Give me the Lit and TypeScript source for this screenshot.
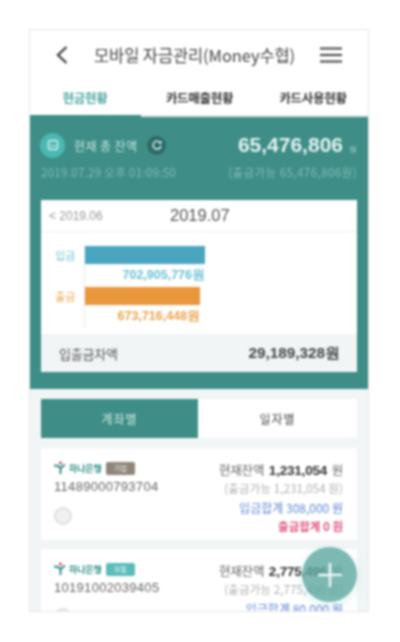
import { LitElement, html, css } from "lit";
import { customElement } from "lit/decorators.js";

@customElement("app-root")
export class AppRoot extends LitElement {
  static styles = css`
    :host { display: block; width: 400px; height: 642px; background: #fff; overflow: hidden; font-family: "Noto Sans CJK KR", "Noto Sans", sans-serif; }
    .page { padding: 29px 0 0 29px; filter: blur(0.9px); }
    .phone { position: relative; box-sizing: border-box; width: 340px; height: 583px; border: 1.5px solid #e6e6e6; background: #f1f5f5; overflow: hidden; }
    .head { height: 48px; background: #fff; display: flex; align-items: center; box-sizing: border-box; padding: 2px 26px 0 25px; }
    .head svg { display: block; flex: none; }
    .title { flex: 1; text-align: center; font-size: 16.5px; letter-spacing: -0.1px; color: #444; white-space: nowrap; }
    .tabs { height: 39px; background: #fff; display: flex; align-items: center; box-sizing: border-box; padding-top: 1px; border-bottom: 2px solid #e2e2e2; position: relative; }
    .tabs span { font-size: 12.5px; font-weight: 700; color: #333; text-align: center; letter-spacing: -0.3px; }
    .tabs .a { width: 110px; color: #4aa79e; }
    .tabs .b { width: 115px; padding-left: 4px; box-sizing: border-box; }
    .tabs .c { flex: 1; padding-left: 3px; }
    .tabs i { position: absolute; left: 0; bottom: -2px; width: 111px; height: 2px; background: #3e8e87; }
    .teal { background: #3e8e87; height: 272px; box-sizing: border-box; padding: 14px 11px 0 10px; }
    .sum { display: flex; justify-content: space-between; height: 69px; }
    .left, .right { display: flex; flex-direction: column; }
    .right { align-items: flex-end; }
    .rowa { display: flex; align-items: center; height: 28px; }
    .ico { width: 25px; height: 25px; border-radius: 50%; background: #4bb8b2; display: flex; align-items: center; justify-content: center; margin-right: 9px; }
    .lbl { font-size: 12px; color: #c5e6e2; letter-spacing: 0.4px; margin-right: 10px; }
    .ref { width: 19px; height: 19px; border-radius: 50%; background: #2f6a66; display: flex; align-items: center; justify-content: center; }
    .date { font-size: 11.5px; color: #7fbdb6; margin-top: 6px; white-space: nowrap; line-height: 14px; letter-spacing: 0.3px; margin-left: 1px; }
    .amt { font-size: 21px; font-weight: 700; color: #e3f1ef; height: 28px; line-height: 28px; font-family: "Liberation Sans", sans-serif; white-space: nowrap; }
    .amt small { font-size: 7.5px; font-weight: 400; color: #a9d4cf; margin-left: 6px; }
    .avail { font-size: 11.5px; color: #7fbdb6; margin-top: 6px; line-height: 14px; white-space: nowrap; letter-spacing: 0.45px; }
    .card { background: #fff; height: 172px; margin-left: 1px; display: flex; flex-direction: column; }
    .months { height: 32px; display: flex; align-items: center; border-bottom: 1px solid #f0f0f0; box-sizing: border-box; padding-left: 8px; }
    .prev { font-size: 12px; color: #999; width: 121px; font-family: "Liberation Sans", sans-serif; }
    .cur { font-size: 16.5px; color: #555; font-family: "Liberation Sans", sans-serif; }
    .chart { flex: 1; display: grid; grid-template-columns: 43px 1fr; padding: 14px 0 0 0; align-content: start; }
    .side { display: flex; align-items: center; justify-content: flex-end; font-size: 11px; height: 18px; padding-right: 9px; letter-spacing: -0.3px; }
    .col { border-left: 1px solid #e8e8e8; }
    .bar { height: 18px; }
    .val { font-size: 12.5px; font-weight: 700; text-align: right; height: 23px; line-height: 23px; font-family: "Liberation Sans", sans-serif; white-space: nowrap; }
    .in { color: #6dc2d6; }
    .out { color: #eca551; }
    .diff { height: 38px; background: #f2f5f6; display: flex; justify-content: space-between; align-items: center; padding: 0 17px 0 18px; }
    .diff span:first-child { font-size: 13px; color: #555; letter-spacing: -0.2px; }
    .diff b { font-size: 15.3px; color: #444; font-family: "Liberation Sans", sans-serif; }
    .seg { margin: 10px 11px 0; height: 39px; display: flex; background: #fff; }
    .seg span { display: flex; align-items: center; justify-content: center; font-size: 12px; letter-spacing: 1px; }
    .seg .on { width: 157px; background: #3e8e87; color: #cfe8e4; }
    .seg .off { flex: 1; color: #444; }
    .acct { margin: 10px 11px 0; background: #fff; height: 92px; display: flex; justify-content: space-between; box-sizing: border-box; padding: 12px 14px 0 13px; }
    .acct.two { margin-top: 9px; height: 100px; }
    .bank { display: flex; align-items: center; height: 16px; }
    .bankname { font-size: 9px; color: #2f8f86; font-weight: 700; margin-left: 2px; width: 34px; white-space: nowrap; letter-spacing: -0.1px; }
    .tag { width: 29px; height: 13px; border-radius: 2px; font-size: 7px; display: flex; align-items: center; justify-content: center; color: #eee; margin-left: 3px; }
    .gray { background: #8f8678; }
    .mint { background: #58bdbb; }
    .num { font-size: 13px; color: #666; line-height: 20px; margin-top: 1px; font-family: "Liberation Sans", sans-serif; letter-spacing: 0.3px; }
    .dot { width: 18px; height: 18px; border-radius: 50%; border: 2px solid #e0e0e0; background: #f0f0f0; box-sizing: border-box; margin-top: 10px; }
    .rt { display: flex; flex-direction: column; align-items: flex-end; }
    .rt div { height: 19px; line-height: 19px; white-space: nowrap; font-size: 12px; }
    .rt .l1 { color: #666; font-size: 12.5px; letter-spacing: -0.2px; }
    .l1 b { color: #333; font-size: 13.5px; margin: 0 2px; font-family: "Liberation Sans", sans-serif; }
    .rt .l2 { color: #b0b0b0; font-size: 11.5px; letter-spacing: 0.1px; }
    .l3 { color: #5c87d6; }
    .rt .l4 { color: #e0567f; font-weight: 700; font-size: 11.5px; }
    .fab { position: absolute; left: 272px; top: 517px; width: 55px; height: 55px; border-radius: 50%; background: rgba(96, 170, 162, 0.82); box-shadow: 0 3px 10px rgba(120, 220, 205, 0.25); display: flex; align-items: center; justify-content: center; }
  `;

  private account(tag: string, cls: string, no: string, bal: string, avail: string, inSum: string, outSum: string | null, two: boolean) {
    return html`<div class="acct ${two ? "two" : ""}">
      <div>
        <div class="bank">
          <svg width="13" height="14" viewBox="0 0 13 14"><path d="M0 4.5c3 0 5 .5 6.5 2.5L11 3.5" fill="none" stroke="#2f8f86" stroke-width="2"/><path d="M6.5 6v7" stroke="#2f8f86" stroke-width="2"/><circle cx="6.5" cy="2" r="1.6" fill="#e04a50"/></svg>
          <span class="bankname">하나은행</span>
          <span class="tag ${cls}">${tag}</span>
        </div>
        <div class="num">${no}</div>
        <div class="dot"></div>
      </div>
      <div class="rt">
        <div class="l1">현재잔액 <b>${bal}</b> 원</div>
        <div class="l2">(출금가능 ${avail} 원)</div>
        <div class="l3">입금합계 ${inSum} 원</div>
        ${outSum ? html`<div class="l4">출금합계 ${outSum} 원</div>` : ""}
      </div>
    </div>`;
  }

  render() {
    return html`<div class="page"><div class="phone">
      <div class="head">
        <svg width="14" height="20" viewBox="0 0 14 20"><path d="M11.5 2 3 10l8.5 8" fill="none" stroke="#444" stroke-width="2.4"/></svg>
        <div class="title">모바일 자금관리(Money수협)</div>
        <svg width="22" height="16" viewBox="0 0 22 16"><path d="M0 1.5h22M0 8h22M0 14.5h22" stroke="#444" stroke-width="2"/></svg>
      </div>
      <div class="tabs">
        <span class="a">현금현황</span><span class="b">카드매출현황</span><span class="c">카드사용현황</span><i></i>
      </div>
      <div class="teal">
        <div class="sum">
          <div class="left">
            <div class="rowa">
              <div class="ico"><svg width="12" height="12" viewBox="0 0 12 12"><rect x="1.5" y="1.5" width="9" height="9" rx="2" fill="none" stroke="#d5f0ee" stroke-width="1.5"/><path d="M3 7h6" stroke="#d5f0ee"/></svg></div>
              <span class="lbl">현재 총 잔액</span>
              <div class="ref"><svg width="12" height="12" viewBox="0 0 12 12"><path d="M9.5 4A4 4 0 1 0 10 7" fill="none" stroke="#dff" stroke-width="1.4"/><path d="M7.5 4.5 10.5 1.5V5z" fill="#dff"/></svg></div>
            </div>
            <div class="date">2019.07.29 오후 01:09:50</div>
          </div>
          <div class="right">
            <div class="amt">65,476,806<small>원</small></div>
            <div class="avail">(출금가능 65,476,806원)</div>
          </div>
        </div>
        <div class="card">
          <div class="months"><span class="prev">&lt; 2019.06</span><span class="cur">2019.07</span></div>
          <div class="chart">
            <div class="side in">입금</div>
            <div class="col"><div class="bar" style="width:120px;background:#4aa6c0"></div></div>
            <div></div>
            <div class="col" style="width:120px"><div class="val in">702,905,776원</div></div>
            <div class="side out">출금</div>
            <div class="col"><div class="bar" style="width:115px;background:#e8973b"></div></div>
            <div></div>
            <div class="col" style="width:115px"><div class="val out">673,716,448원</div></div>
          </div>
          <div class="diff"><span>입출금차액</span><b>29,189,328원</b></div>
        </div>
      </div>
      <div class="seg"><span class="on">계좌별</span><span class="off">일자별</span></div>
      ${this.account("기업", "gray", "11489000793704", "1,231,054", "1,231,054", "308,000", "0", false)}
      ${this.account("보통", "mint", "10191002039405", "2,775,496", "2,775,496", "80,000", null, true)}
      <div class="fab"><svg width="26" height="26" viewBox="0 0 26 26"><path d="M13 1v24M1 13h24" stroke="#eef8f6" stroke-width="2.4"/></svg></div>
    </div></div>`;
  }
}
